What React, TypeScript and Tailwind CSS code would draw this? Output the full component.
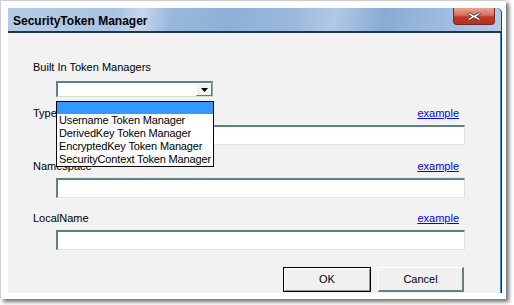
import React from "react";

const font = "font-['Liberation_Sans',Arial,sans-serif]";

function Field() {
  return (
    <div className="mt-[5px] ml-[23px] w-[409px] h-[20px] bg-white border-t-2 border-l-2 border-t-[#5b8384] border-l-[#5b8384] border-r border-b border-r-[#e2e2e2] border-b-[#e2e2e2]" />
  );
}

function LabelRow({ label, link, mt }: { label: string; link?: boolean; mt: string }) {
  return (
    <div className={`${mt} h-[13px] leading-[13px] flex justify-between pr-[6px]`}>
      <span>{label}</span>
      {link && <span className="text-[#0000ff] underline">example</span>}
    </div>
  );
}

export default function App() {
  return (
    <div className={`w-[514px] h-[305px] bg-white ${font} text-[11px] text-black`}>
      <div className="w-[506px] h-[299px] bg-white border-l border-t border-[#cfcfcf] shadow-[3px_3px_4px_rgba(0,0,0,0.55)] pt-[7px] pl-[7px]">
        <div className="w-[494px] h-[285px] flex flex-col overflow-hidden">
          {/* Title bar */}
          <div className="relative h-[25px] shrink-0 border-b-2 border-b-[#233245] rounded-tr-[5px] border-r border-r-[#2a3f5a] bg-[linear-gradient(100deg,#b5cce7_0%,#a9c3e2_22%,#c6d8ee_27%,#9ab8dc_33%,#8eafd8_45%,#9cb9dd_58%,#b0c9e6_66%,#8aabd4_76%,#9fbce0_88%,#b2cbe7_100%)] pl-[5px] pt-[3px] flex items-center">
            <span className="font-bold text-[12px] leading-[14px] text-black">SecurityToken Manager</span>
            <div className="absolute right-[6px] top-0 w-[42px] h-[17px] rounded-b-[4px] border border-t-0 border-[#6e2c24] bg-[linear-gradient(180deg,#eaa394_0%,#d8705f_45%,#c23a28_55%,#b5321f_100%)] flex items-center justify-center">
              <svg width="16" height="11" viewBox="0 0 16 11">
                <path d="M3 1.5 L8 4.2 L13 1.5 L14.5 3 L10.5 5.5 L14.5 8 L13 9.5 L8 6.8 L3 9.5 L1.5 8 L5.5 5.5 L1.5 3 Z" fill="#ffffff" stroke="#4a2a2a" strokeWidth="0.9" strokeLinejoin="round" />
              </svg>
            </div>
          </div>
          {/* Body */}
          <div className="flex-1 bg-[#f2f2f2] border-r border-r-[#1d2c3c] shadow-[inset_-1px_0_0_#3b88d8] pl-[25px] pt-[28px]">
            <div className="w-[432px] flex flex-col">
              <div className="h-[13px] leading-[13px]">Built In Token Managers</div>
              {/* Combo */}
              <div className="relative mt-[7px] ml-[23px] w-[157px] h-[16px] bg-white border-t-2 border-l-2 border-t-[#5b8384] border-l-[#5b8384] border-r border-b border-r-[#8fa6a6] border-b-[#d6dede] flex justify-end items-start">
                <div className="w-[16px] h-[13px] bg-[#f0f0f0] border-t border-l border-t-white border-l-white border-r border-b border-r-[#5f7f80] border-b-[#5f7f80] flex items-center justify-center">
                  <svg width="7" height="4" viewBox="0 0 7 4">
                    <path d="M0 0 H7 L3.5 4 Z" fill="#000" />
                  </svg>
                </div>
                <div className="absolute left-[-2px] top-[18px] w-[158px] bg-white border border-black z-10">
                  <div className="h-[12px] bg-[#3399ff]" />
                  {["Username Token Manager", "DerivedKey Token Manager", "EncryptedKey Token Manager", "SecurityContext Token Manager"].map((t) => (
                    <div key={t} className="h-[13px] leading-[13px] pl-[2px] whitespace-nowrap tracking-[-0.15px]">
                      {t}
                    </div>
                  ))}
                </div>
              </div>
              <LabelRow label="Type" link mt="mt-[10px]" />
              <Field />
              <LabelRow label="Namespace" link mt="mt-[15px]" />
              <Field />
              <LabelRow label="LocalName" link mt="mt-[14px]" />
              <Field />
              <div className="mt-[17px] flex justify-end gap-[7px] pr-[1px]">
                <div className="w-[88px] h-[25px] border border-black bg-[#f0f0f0] shadow-[inset_1px_1px_0_#ffffff,inset_-1px_-1px_0_#8a9a9a] flex items-center justify-center leading-[13px]">
                  OK
                </div>
                <div className="w-[86px] h-[25px] bg-[#f0f0f0] border-t border-l border-t-white border-l-white border-r-2 border-b-2 border-r-[#5f8384] border-b-[#5f8384] flex items-center justify-center leading-[13px]">
                  Cancel
                </div>
              </div>
            </div>
          </div>
        </div>
      </div>
    </div>
  );
}
